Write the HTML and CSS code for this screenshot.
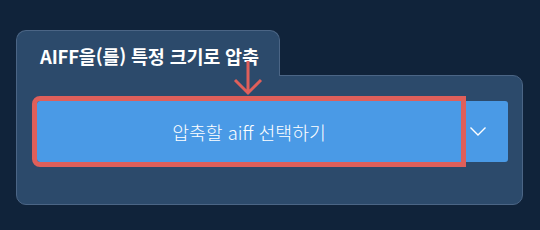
FILE: index.html
```html
<!doctype html>
<html lang="ko">
  <head>
    <meta charset="UTF-8" />
    <title>AIFF 압축</title>
    <link rel="stylesheet" href="styles.css">
  </head>
  <body>
    <div class="card">
      <div class="tab">AIFF을(를) 특정 크기로 압축</div>
      <div class="panel">
        <div class="btn-group">
          <button class="btn-main">압축할 aiff 선택하기</button>
          <button class="btn-drop">
            <svg width="18" height="11" viewBox="0 0 18 11">
              <path d="M1.5 1.5 L9 9 L16.5 1.5" fill="none" stroke="#fff" stroke-width="1.4" />
            </svg>
          </button>
        </div>
      </div>
      <svg class="arrow" width="32" height="38" viewBox="0 0 32 38">
        <path d="M16 2 V33 M3 21 L16 34 L29 21" fill="none" stroke="#df5f5a" stroke-width="3" />
      </svg>
    </div>
  </body>
</html>
```

FILE: styles.css
```css
body {
  margin: 0;
  background-color: #10233a;
  font-family: "Noto Sans CJK KR", "Noto Sans", sans-serif;
  width: 540px;
  height: 230px;
}
.card {
  position: relative;
  padding: 30px 0 0 16px;
}
.tab {
  position: relative;
  z-index: 1;
  width: 264px;
  height: 46px;
  margin-bottom: -1px;
  box-sizing: border-box;
  background-color: #2c4a6b;
  border: 1px solid #4b6585;
  border-bottom: none;
  border-radius: 10px 10px 0 0;
  color: #fff;
  font-size: 18.5px;
  font-weight: bold;
  padding: 13px 0 0 23px;
  line-height: 25px;
  letter-spacing: -0.2px;
  white-space: nowrap;
}
.panel {
  width: 507px;
  height: 130px;
  box-sizing: border-box;
  background-color: #2c4a6b;
  border: 1px solid #4b6585;
  border-radius: 0 10px 10px 10px;
  padding: 25px 14px 0 20px;
}
.btn-group {
  display: flex;
  height: 61px;
}
.btn-main,
.btn-drop {
  border: none;
  background-color: #4a9ae6;
  color: #fff;
  font-family: inherit;
  cursor: pointer;
}
.btn-main {
  width: 424px;
  font-size: 18.3px;
  font-weight: 300;
  border-radius: 3px 0 0 3px;
  outline: 5px solid #df5f5a;
  position: relative;
  z-index: 1;
  padding: 0;
}
.btn-drop {
  width: 47px;
  border-radius: 0 3px 3px 0;
  display: flex;
  align-items: center;
  justify-content: center;
  padding: 0 14px 0 0;
}
.arrow {
  position: absolute;
  left: 232px;
  top: 59px;
  z-index: 2;
}
```
